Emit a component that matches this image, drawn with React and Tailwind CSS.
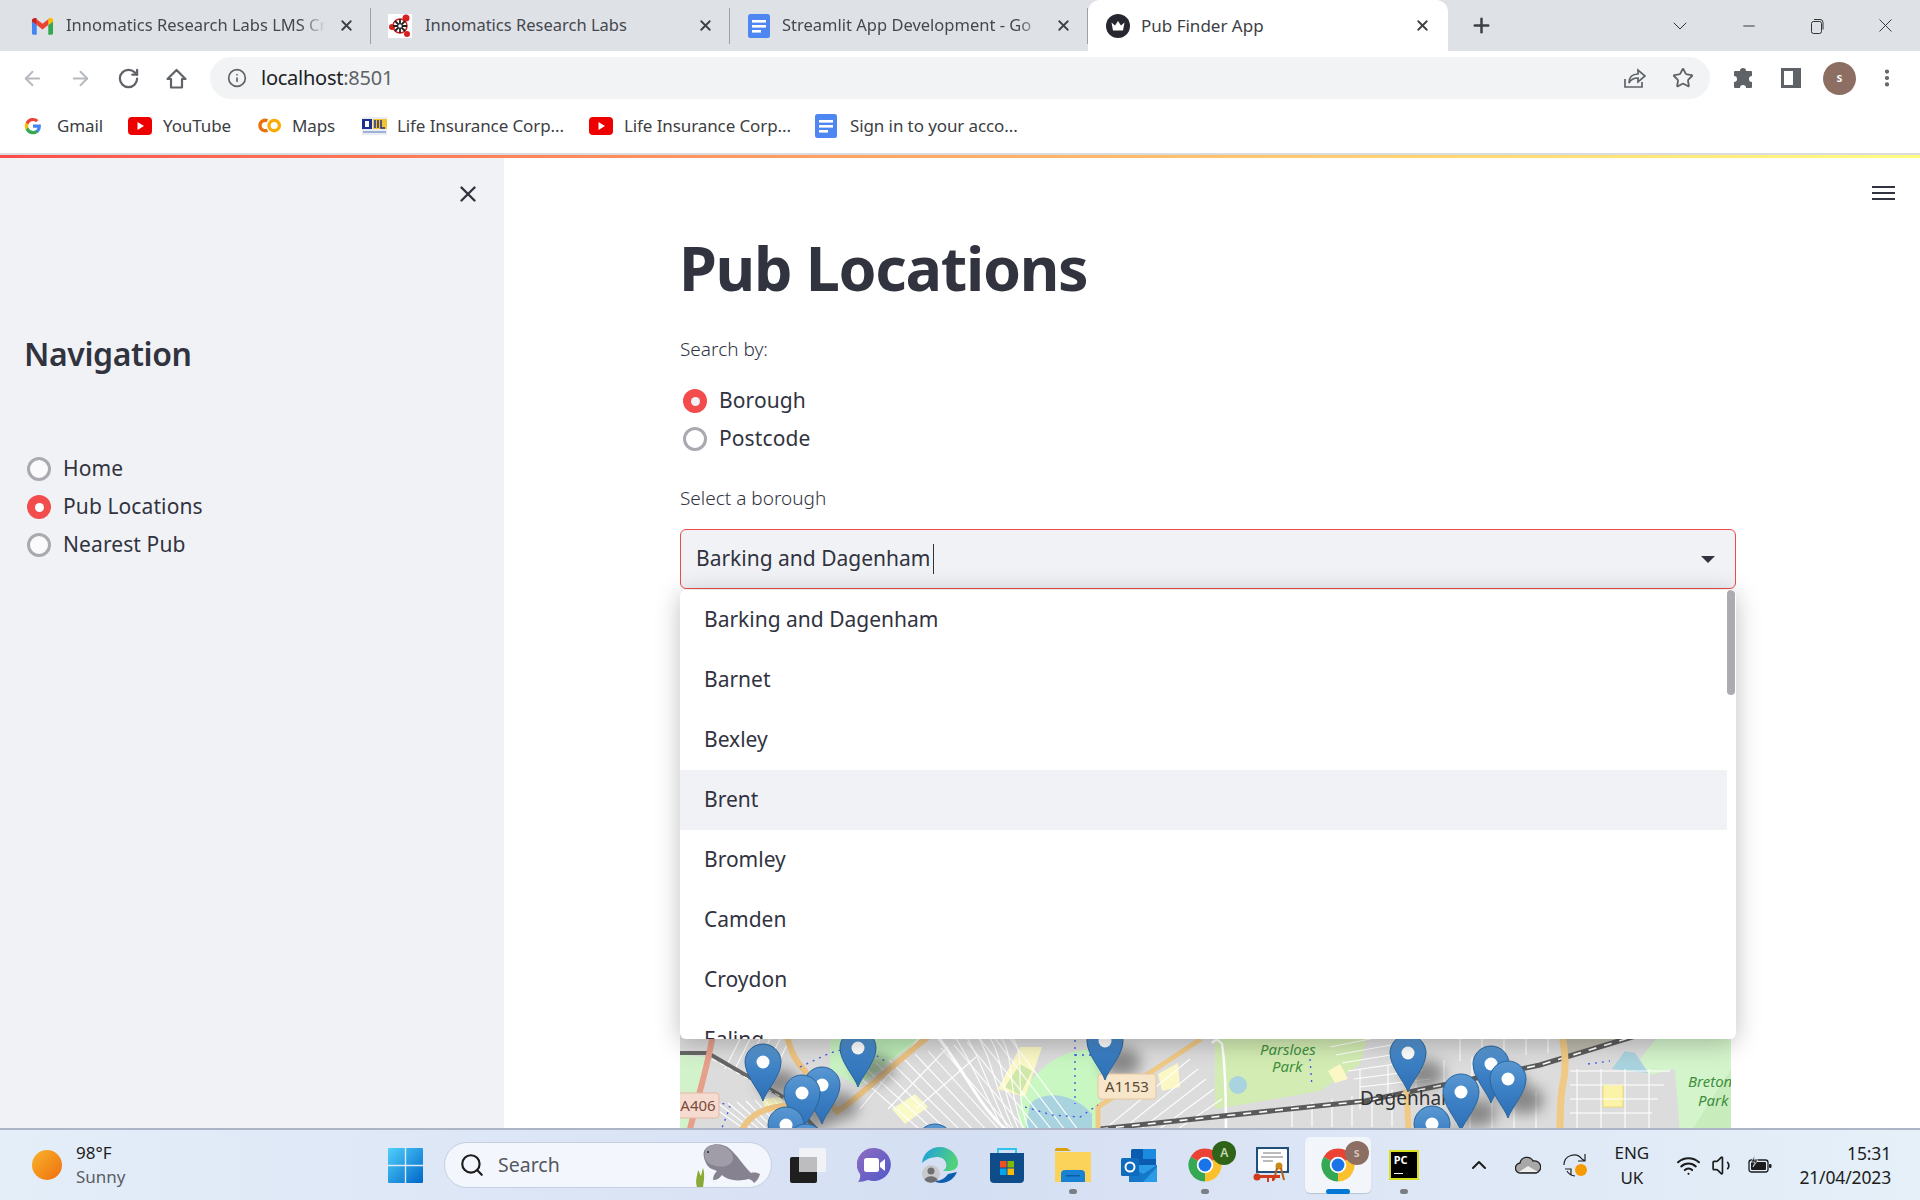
import React from 'react';
import {
	ArrowLeft, ArrowRight, RotateCw, Info, Star, X, Plus, ChevronDown, ChevronUp,
	Minus, EllipsisVertical, Search, Wifi, Volume1,
} from 'lucide-react';

/* favicons and app icons */
const GmailIcon = () => (
	<svg width="23" height="18" viewBox="0 0 24 18">
		<path d="M1 4v12.5A1.5 1.5 0 0 0 2.5 18H6V8z" fill="#4285f4" />
		<path d="M23 4v12.5a1.5 1.5 0 0 1-1.5 1.5H18V8z" fill="#34a853" />
		<path d="M18 1v7l5-3.7V3c0-2-2.3-3.2-4-2z" fill="#fbbc04" />
		<path d="M6 8V2l6 4.6L18 2v6l-6 4.6z" fill="#ea4335" />
		<path d="M1 3v1.3L6 8V1.2C4.300 0 1 1 1 3z" fill="#c5221f" />
	</svg>
);

const GoogleIcon = () => (
	<svg width="18" height="18" viewBox="0 0 24 24">
		<path d="M22.500 12.200c0-.8-.1-1.500-.2-2.200H12v4.200h5.900a5 5 0 0 1-2.200 3.300v2.700h3.500c2.100-1.900 3.300-4.700 3.300-8z" fill="#4285f4" />
		<path d="M12 23c3 0 5.400-1 7.200-2.700l-3.500-2.700c-1 .7-2.200 1-3.700 1-2.800 0-5.300-1.900-6.100-4.500H2.300v2.800A11 11 0 0 0 12 23z" fill="#34a853" />
		<path d="M5.900 14.100a6.600 6.600 0 0 1 0-4.200V7.100H2.300a11 11 0 0 0 0 9.800z" fill="#fbbc04" />
		<path d="M12 5.400c1.600 0 3 .6 4.100 1.600l3.100-3.100A11 11 0 0 0 2.300 7.100l3.600 2.800C6.700 7.300 9.200 5.400 12 5.400z" fill="#ea4335" />
	</svg>
);

const YoutubeIcon = () => (
	<svg width="24" height="18" viewBox="0 0 24 18">
		<rect width="24" height="18" rx="4" fill="#ee0000" />
		<path d="M9.500 5l6.500 4-6.500 4z" fill="#fff" />
	</svg>
);

const DocsIcon = ({ w = 24, h = 24 }) => (
	<svg width={w} height={h} viewBox="0 0 24 24">
		<rect x="1" y="0" width="22" height="24" rx="2.500" fill="#4e86f2" />
		<rect x="5" y="6" width="14" height="2.600" fill="#fff" />
		<rect x="5" y="11" width="14" height="2.600" fill="#fff" />
		<rect x="5" y="16" width="9" height="2.600" fill="#fff" />
	</svg>
);

const ColabIcon = () => (
	<svg width="25" height="17" viewBox="0 0 24 16" fill="none">
		<path d="M10 3.500a5 5 0 1 0 0 9" stroke="#e8710a" strokeWidth="3.200" />
		<circle cx="16.500" cy="8" r="5" stroke="#f9ab00" strokeWidth="3.200" />
	</svg>
);

const LicIcon = () => (
	<svg width="25" height="18" viewBox="0 0 25 18">
		<rect width="25" height="18" fill="#e8edf5" />
		<rect x="0" y="2" width="10" height="10" fill="#1d2f8f" />
		<rect x="3" y="4" width="4" height="6" fill="#fff" />
		<rect x="11" y="2" width="14" height="10" fill="#f2c230" />
		<path d="M13 3v8M16 3v8M19 3v8h4" stroke="#23308c" strokeWidth="1.500" fill="none" />
		<rect x="1" y="14" width="23" height="2" fill="#9fb2d6" />
	</svg>
);

const InnomaticsIcon = () => (
	<svg width="24" height="24" viewBox="0 0 24 24">
		<rect width="24" height="24" fill="#fff" />
		<circle cx="4" cy="13" r="3" fill="#d8201f" />
		<circle cx="18" cy="4" r="3.500" fill="#d8201f" />
		<circle cx="19" cy="20" r="3" fill="#d8201f" />
		<circle cx="12" cy="12" r="7" fill="none" stroke="#d8201f" strokeWidth="1.500" />
		<path d="M12 5v14M5 12h14M7 7l10 10M17 7L7 17" stroke="#222" strokeWidth="1.800" />
		<circle cx="12" cy="12" r="1.800" fill="#fff" />
	</svg>
);

const CrownIcon = () => (
	<svg width="24" height="24" viewBox="0 0 24 24">
		<circle cx="12" cy="12" r="12" fill="#262730" />
		<path d="M5.500 8.500l3.500 3 3-4.500 3 4.500 3.500-3-1.500 8h-10z" fill="#fff" />
	</svg>
);

const ChromeIcon = ({ size = 36 }) => (
	<svg width={size} height={size} viewBox="0 0 24 24">
		<path d="M12 12L2.470 6.500A11 11 0 0 1 21.530 6.500z" fill="#ea4335" />
		<path d="M12 12L21.530 6.500A11 11 0 0 1 12 23z" fill="#fbc02d" />
		<path d="M12 12L12 23A11 11 0 0 1 2.470 6.500z" fill="#34a853" />
		<circle cx="12" cy="12" r="5.500" fill="#fff" />
		<circle cx="12" cy="12" r="4.300" fill="#1a73e8" />
	</svg>
);

const WindowsIcon = () => (
	<svg width="35" height="35" viewBox="0 0 35 35">
		<defs>
			<linearGradient id="winGrad" x1="0" y1="0" x2="1" y2="1">
				<stop offset="0" stopColor="#4fd0fb" />
				<stop offset="1" stopColor="#0067c8" />
			</linearGradient>
		</defs>
		<path d="M1 0h15.800v16.800H0V1a1 1 0 0 1 1-1zM18.200 0H34a1 1 0 0 1 1 1v15.800H18.200zM0 18.200h16.800V35H1a1 1 0 0 1-1-1zM18.200 18.200H35V34a1 1 0 0 1-1 1H18.200z" fill="url(#winGrad)" />
	</svg>
);

const ManateeIcon = () => (
	<svg width="66" height="44" viewBox="0 0 66 44">
		<path d="M2 44c-2-6 0-10 1-17 2 3 2 5 3 6 1-3 1-6 2-8 2 6 1 13 0 19z" fill="#8aa936" />
		<path d="M9 8c4-8 18-9 26-2 7 6 13 16 21 24 3-1 7 0 9 1-1 4-3 7-6 9-2-3-4-4-6-4-10 3-21 1-26-4-2 3-5 5-9 5 0-3 1-6 4-9-5-2-9-3-11-8-2-4-3-8-2-12z" fill="#86828f" />
		<path d="M12 4c6-4 18-3 24 5 4 6 2 12-5 14-8 2-19-1-21-8-1-4 0-8 2-11z" fill="#a09ca8" />
		<circle cx="13" cy="9" r="1" fill="#222" />
	</svg>
);

const TaskViewIcon = () => (
	<svg width="36" height="35" viewBox="0 0 36 35">
		<rect x="0" y="9" width="27" height="26" rx="2" fill="#1f1f1f" />
		<rect x="9" y="0" width="27" height="24" rx="2" fill="#f4f4f6" fillOpacity="0.85" />
		<rect x="9" y="9" width="18" height="15" fill="#bdbdc0" />
	</svg>
);

const TeamsIcon = () => (
	<svg width="34" height="34" viewBox="0 0 34 34">
		<defs>
			<linearGradient id="teamsGrad" x1="0" y1="0" x2="1" y2="1">
				<stop offset="0" stopColor="#8f6cc0" />
				<stop offset="1" stopColor="#5059c9" />
			</linearGradient>
		</defs>
		<path d="M17 0a17 16.500 0 1 1-6 32c-3 1-7 2-10 2 2-2 2.500-5 2-8A17 16.500 0 0 1 17 0z" fill="url(#teamsGrad)" />
		<rect x="7" y="10" width="15" height="14" rx="2.500" fill="#fff" />
		<path d="M23 15l5-4v12l-5-4z" fill="#fff" />
	</svg>
);

const EdgeIcon = () => (
	<svg width="36" height="36" viewBox="0 0 36 36">
		<defs>
			<linearGradient id="edgeGrad" x1="0" y1="0" x2="1" y2="0.300">
				<stop offset="0" stopColor="#1b9de2" />
				<stop offset="1" stopColor="#52d17c" />
			</linearGradient>
		</defs>
		<path d="M0 16C1 6 9 0 18 0c10 0 18 8 18 16 0 6-5 8-10 8h-5c3-2 4-5 3-8-1-4-5-6-9-6-6 0-11 2-15 6z" fill="url(#edgeGrad)" />
		<path d="M35 25c-3 7-9 11-16 11-3 0-6-1-8-3 8 2 12-2 15-6 3-1 6-1 9-2z" fill="#0f5fb0" />
		<circle cx="9" cy="27" r="9" fill="#c9c9cc" />
		<circle cx="9" cy="24" r="3.500" fill="#6f6f73" />
		<path d="M2.500 33a7 6 0 0 1 13 0 9 9 0 0 1-13 0z" fill="#6f6f73" />
	</svg>
);

const StoreIcon = () => (
	<svg width="36" height="36" viewBox="0 0 36 36">
		<path d="M9 6V2h18v4" fill="none" stroke="#2ec4f0" strokeWidth="1.800" />
		<path d="M1 6h34v26a4 4 0 0 1-4 4H5a4 4 0 0 1-4-4z" fill="#0f4c8a" />
		<rect x="11" y="14" width="6.500" height="6.500" fill="#f25022" />
		<rect x="18.500" y="14" width="6.500" height="6.500" fill="#7fba00" />
		<rect x="11" y="21.500" width="6.500" height="6.500" fill="#00a4ef" />
		<rect x="18.500" y="21.500" width="6.500" height="6.500" fill="#ffb900" />
	</svg>
);

const ExplorerIcon = () => (
	<svg width="36" height="34" viewBox="0 0 36 34">
		<path d="M0 2a2 2 0 0 1 2-2h10l4 3h-16z" fill="#d9a106" />
		<path d="M0 4h36v30H0z" fill="#fbd35a" />
		<path d="M6 34V26a4 4 0 0 1 4-4h16a4 4 0 0 1 4 4v8z" fill="#1a82d4" />
		<rect x="11" y="27" width="14" height="1.500" fill="#0d5da3" />
	</svg>
);

const OutlookIcon = () => (
	<svg width="36" height="33" viewBox="0 0 36 33">
		<rect x="10" y="0" width="25" height="20" rx="1.500" fill="#0a5cb0" />
		<rect x="22" y="0" width="13" height="10" fill="#1c8ade" />
		<path d="M8 16h28v17H8z" fill="#2a9be6" />
		<path d="M8 16l14 9 14-9v2L22 33H8z" fill="#1577c9" />
		<rect x="0" y="9" width="18" height="18" rx="1.500" fill="#0f6cbd" />
		<circle cx="9" cy="18" r="4.500" fill="none" stroke="#fff" strokeWidth="2" />
	</svg>
);

const CertIcon = () => (
	<svg width="36" height="36" viewBox="0 0 36 36">
		<rect x="3" y="0" width="33" height="26" fill="#1f4f7a" />
		<rect x="5" y="2" width="29" height="22" rx="1" fill="#fff" />
		<path d="M10 6h18M8 10h22M10 14h10" stroke="#777" strokeWidth="1" />
		<circle cx="26" cy="19" r="3.500" fill="#c98a1a" />
		<path d="M24 21l-3 12M28 21l3 12" stroke="#b2601a" strokeWidth="2" />
		<rect x="3" y="28" width="24" height="3" fill="#d23a1c" />
		<circle cx="4" cy="30" r="3.500" fill="#d23a1c" />
		<path d="M15 31v4M20 31v3" stroke="#d23a1c" strokeWidth="2" />
	</svg>
);

const CloudIcon = () => (
	<svg width="26" height="18" viewBox="0 0 26 18">
		<path d="M6 17a5 5 0 0 1-1-10 7 7 0 0 1 13-2 6 6 0 0 1 3 12z" fill="#a8a8a8" stroke="#222" strokeWidth="1.300" />
		<path d="M4 16l9-6 10 6z" fill="#eee" />
	</svg>
);

const SyncIcon = () => (
	<svg width="26" height="26" viewBox="0 0 26 26" fill="none">
		<path d="M1 13a10 10 0 0 1 18-6l3 2M22 2v7h-7" stroke="#222" strokeWidth="1.200" />
		<path d="M12 24a10 10 0 0 1-8-5M2 17h6v6" stroke="#222" strokeWidth="1.200" />
		<circle cx="18" cy="18" r="6" fill="#f59a00" />
	</svg>
);

const BatteryIcon = () => (
	<svg width="24" height="20" viewBox="0 0 24 20" fill="none">
		<rect x="1" y="5" width="19" height="12" rx="2.500" stroke="#1c1c1c" strokeWidth="1.300" />
		<rect x="3" y="7" width="15" height="8" rx="1" fill="#1c1c1c" />
		<rect x="21" y="9" width="2.500" height="4" rx="1" fill="#1c1c1c" />
		<path d="M7 0L3 7h4l-2 5 5-7H6z" fill="#1c1c1c" stroke="#e6eef8" strokeWidth="0.700" />
	</svg>
);

const HomeIcon = () => (
	<svg width="23" height="23" viewBox="0 0 23 23" fill="none" stroke="#5f6368" strokeWidth="2.200" strokeLinejoin="round">
		<path d="M11.500 3L2.500 12H6V20.500H17V12H20.500z" />
	</svg>
);

const ShareIcon = () => (
	<svg width="22" height="22" viewBox="0 0 22 22" fill="none" stroke="#5f6368" strokeWidth="1.700">
		<path d="M1 12v8h17v-5" />
		<path d="M5 16c0-6 3-9 9-9V3l7 6-7 6v-4c-4 0-7 1-9 5z" />
	</svg>
);

const PuzzleIcon = () => (
	<svg width="22" height="22" viewBox="0 0 22 22" fill="#5f6368">
		<path d="M8 4a3 3 0 0 1 6 0h5a1 1 0 0 1 1 1v4a3 3 0 0 0 0 6v5a1 1 0 0 1-1 1h-5a3 3 0 0 0-6 0H3a1 1 0 0 1-1-1v-5a3 3 0 0 0 0-6V5a1 1 0 0 1 1-1z" />
	</svg>
);

const SidePanelIcon = () => (
	<svg width="20" height="20" viewBox="0 0 20 20">
		<rect x="1.500" y="1.500" width="17" height="17" fill="none" stroke="#5f6368" strokeWidth="3" />
		<rect x="12" y="1" width="7" height="18" fill="#5f6368" />
	</svg>
);

const RestoreIcon = () => (
	<svg width="16" height="16" viewBox="0 0 16 16" fill="none" stroke="#333" strokeWidth="1">
		<rect x="2.500" y="3.500" width="10" height="12" rx="2" />
		<path d="M5 1.500h6a3 3 0 0 1 3 3v7" />
	</svg>
);

/* street map strip under the dropdown */
const range = (n) => Array.from({ length: n }, (_, i) => i);

const pins = [
	[83, 62], [178, 48], [142, 85], [122, 93], [106, 125], [126, 142], [255, 142], [425, 41],
	[728, 53], [811, 64], [828, 79], [781, 92], [752, 124],
];

const Pin = ({ x, y }) => (
	<g transform={`translate(${x} ${y})`}>
		<path d="M0 0C-3-10-18-25-18-39A18 18 0 1 1 18-39C18-25 3-10 0 0Z" fill="url(#pinGrad)" stroke="#2a659c" strokeWidth="1" />
		<circle cx="0" cy="-39" r="6.500" fill="#fff" />
	</g>
);

const MapStrip = () => (
	<svg width="1051" height="106" viewBox="0 -12 1051 106" className="block">
		<defs>
			<linearGradient id="pinGrad" x1="0" y1="0" x2="0" y2="1">
				<stop offset="0" stopColor="#5a98d2" />
				<stop offset="0.5" stopColor="#3b7fc4" />
				<stop offset="1" stopColor="#2f6fb4" />
			</linearGradient>
			<filter id="pinShadow"><feGaussianBlur stdDeviation="7" /></filter>
			<filter id="soft"><feGaussianBlur stdDeviation="0.500" /></filter>
		</defs>
		<g filter="url(#soft)">
			<rect x="0" y="-12" width="1051" height="106" fill="#dcdcdc" />
			{/* green areas and water */}
			<path d="M0 15L26 18L10 94H0z" fill="#d2f2cc" />
			<path d="M150 -12H255L178 48L150 30z" fill="#c9f2c2" />
			<path d="M170 14L210 -12L250 -12L178 48z" fill="#bfeeb9" />
			<path d="M350 42C370 20 385 10 420 10V68L416 94H342C335 70 340 55 350 42z" fill="#c8f7c2" />
			<path d="M350 65C365 50 395 55 412 75V94H345z" fill="#a9d3de" />
			<path d="M318 50L340 8L362 8L345 58z" fill="#fbf8c6" />
			<path d="M325 48L340 25L352 32L340 56z" fill="#cfe8aa" />
			<path d="M212 70L235 55L248 68L225 85z" fill="#fafac8" />
			<path d="M83 60L100 58L105 70L85 72z" fill="#f6f4bc" />
			<path d="M478 35L498 24L500 48L482 52z" fill="#fbf8c6" />
			<path d="M535 -12H690L680 25L640 52L535 70z" fill="#d3ecb3" />
			<ellipse cx="558" cy="46" rx="9" ry="9" fill="#a9d3de" />
			<path d="M648 32L660 25L668 40L655 44z" fill="#fbf8c6" />
			<path d="M885 -12H985L885 20z" fill="#bcb9ad" />
			<path d="M1000 94L995 30L970 36L960 20L985 -12H1051V94z" fill="#d4f4cb" />
			<path d="M1010 94L1051 30V94z" fill="#c8ecbc" />
			<path d="M932 30L945 12L955 14L968 34z" fill="#a9d3de" />
			<rect x="923" y="46" width="20" height="22" fill="#fbf3a8" stroke="#e8d878" />
			{/* housing streets */}
			<g stroke="#fff" strokeWidth="1.100" fill="none">
				{range(13).map((i) => (
					<path key={i} d={`M${170 + i * 13} ${30 - i * 3}L${245 + i * 13} 95`} />
				))}
				{range(3).map((i) => (
					<path key={i} d={`M${240 + i * 28} ${-2 + i * 10}L${180 + i * 28} 70`} />
				))}
				{range(6).map((i) => (
					<path key={i} d={`M${270 + i * 12} ${-10 + i}C${290 + i * 12} 20 ${300 + i * 6} 45 ${325 + i * 5} 94`} />
				))}
				{range(5).map((i) => (
					<path key={i} d={`M${420 + i * 18} 94L${510 + i * 8} ${20 + i * 10}`} />
				))}
				{range(8).map((i) => (
					<path key={i} d={`M${30 + i * 9} ${66 - i}L${70 + i * 7} 94`} />
				))}
				{range(6).map((i) => (
					<path key={i} d={`M${60 + i * 10} 0L${45 + i * 10} 30`} />
				))}
				{range(6).map((i) => (
					<path key={i} d={`M${680 + i * 28} ${70 - i * 8}V${30 - i * 3}`} />
				))}
				{range(6).map((i) => (
					<path key={i} d={`M${650 + i * 6} ${8 + i * 8}L${715 + i * 7} ${-5 + i * 9}`} />
				))}
				{range(5).map((i) => (
					<path key={i} d={`M${780 + i * 22} -12V${22 - i * 2}`} />
				))}
				{range(4).map((i) => (
					<path key={i} d={`M890 ${32 + i * 14}H${990 - i * 6}`} />
				))}
				{range(4).map((i) => (
					<path key={i} d={`M${897 + i * 24} 30V94`} />
				))}
				{range(6).map((i) => (
					<path key={i} d={`M${612 + i * 20} 88V${66 - i * 3}`} />
				))}
				{range(4).map((i) => (
					<path key={i} d={`M${790 + i * 22} 94V${50 + i}`} />
				))}
			</g>
			<path d="M258 -2C290 40 300 70 330 94" stroke="#fff" strokeWidth="3" fill="none" />
			<path d="M0 4C4 0 6 0 10 5C14 30 14 70 14 94" stroke="#fff" strokeWidth="2.500" fill="none" transform="translate(532 0)" />
			{/* railways */}
			<path d="M0 14L28 14L110 62L140 94" stroke="#666" strokeWidth="4" fill="none" />
			<path d="M32 20L105 60" stroke="#fff" strokeWidth="1" strokeDasharray="5 4" fill="none" />
			<path d="M420 90L685 62L860 26L985 -12" stroke="#5a5a5a" strokeWidth="5" fill="none" />
			<path d="M420 90L685 62L860 26L985 -12" stroke="#fff" strokeWidth="1.600" strokeDasharray="8 8" fill="none" />
			{/* main roads */}
			<path d="M34 -12C30 20 20 50 9 94" stroke="#e69f8a" strokeWidth="6" fill="none" />
			<path d="M105 -12C110 15 118 25 125 32L158 74" stroke="#eec482" strokeWidth="6" fill="none" />
			<path d="M60 94C70 74 85 68 112 66" stroke="#eec482" strokeWidth="6" fill="none" />
			<path d="M155 74C175 62 190 45 255 -8" stroke="#eec482" strokeWidth="6" fill="none" />
			<path d="M418 94V68L521 0" stroke="#f0c985" strokeWidth="5" fill="none" />
			<path d="M726 50C728 65 727 75 729 94" stroke="#f0c985" strokeWidth="6" fill="none" />
			<path d="M881 -12C884 10 888 25 882 50C880 65 880 75 880 94" stroke="#f0c985" strokeWidth="7" fill="none" />
			{/* cycle and foot paths */}
			<path d="M120 28L150 14L180 6L208 24M30 58L50 68L40 94M395 -6V65M345 68L372 76L400 78L418 66M395 16L430 16" stroke="#3f56e8" strokeWidth="1.300" strokeDasharray="2 5" fill="none" />
			<path d="M630 20L632 48M908 25L930 22" stroke="#3f56e8" strokeWidth="1.300" strokeDasharray="2 5" fill="none" />
		</g>
		{/* marker shadows */}
		<g filter="url(#pinShadow)" fill="#444" opacity="0.55">
			{pins.map(([x, y]) => (
				<ellipse key={`${x}-${y}`} cx={x + 16} cy={y - 18} rx="20" ry="14" />
			))}
		</g>
		{/* road shields and place names */}
		<rect x="-3" y="54" width="42" height="25" rx="3" fill="#f6dcd0" stroke="#e3b9a6" />
		<text x="18" y="72" textAnchor="middle" fontSize="15" fill="#7a4a3a">A406</text>
		<rect x="418" y="35" width="58" height="25" rx="3" fill="#f8e6cb" stroke="#e5c79c" />
		<text x="447" y="53" textAnchor="middle" fontSize="15" fill="#5a4a35">A1153</text>
		<g fontStyle="italic" fontSize="15" fill="#3f8f3f">
			<text x="580" y="16">Parsloes</text>
			<text x="592" y="33">Park</text>
			<text x="1008" y="48">Bretons</text>
			<text x="1018" y="67">Park</text>
		</g>
		<text x="680" y="66" fontSize="19" fill="#333">Dagenham</text>
		{pins.map(([x, y]) => <Pin key={`${x}-${y}`} x={x} y={y} />)}
	</svg>
);

const tabs = [
	{ icon: <GmailIcon />, title: 'Innomatics Research Labs LMS Cr', width: 'w-[363px]', pad: 'pl-[22px]', gap: 'gap-[12px]', fade: true },
	{ icon: <InnomaticsIcon />, title: 'Innomatics Research Labs', width: 'w-[359px]', pad: 'pl-[17px]', gap: 'gap-[13px]' },
	{ icon: <DocsIcon />, title: 'Streamlit App Development - Go', width: 'w-[358px]', pad: 'pl-[17px]', gap: 'gap-[11px]', fade: true },
];

const bookmarks = [
	{ icon: <GoogleIcon />, label: 'Gmail', width: 'w-[104px]', gap: 'gap-[15px]' },
	{ icon: <YoutubeIcon />, label: 'YouTube', width: 'w-[129px]', gap: 'gap-[11px]' },
	{ icon: <ColabIcon />, label: 'Maps', width: 'w-[105px]', gap: 'gap-[10px]' },
	{ icon: <LicIcon />, label: 'Life Insurance Corp...', width: 'w-[227px]', gap: 'gap-[10px]' },
	{ icon: <YoutubeIcon />, label: 'Life Insurance Corp...', width: 'w-[225px]', gap: 'gap-[11px]' },
	{ icon: <DocsIcon />, label: 'Sign in to your acco...', width: 'w-[220px]', gap: 'gap-[12px]' },
];

const TabStrip = () => (
	<div className="flex h-[51px] shrink-0 items-center bg-[#dee1e6] text-[#45484e]">
		<div className="flex h-[51px] items-center pl-[8px]">
			{tabs.map((t) => (
				<div key={t.title} className={`flex h-[36px] ${t.width} items-center ${t.gap} border-r border-[#9da0a6] ${t.pad} pr-[15px]`}>
					<span className="flex w-[24px] shrink-0 justify-center">{t.icon}</span>
					<span className={`min-w-0 flex-1 overflow-hidden whitespace-nowrap text-[16.500px] ${t.fade ? '[mask-image:linear-gradient(to_right,black_90%,transparent)]' : ''}`}>{t.title}</span>
					<X size={17} strokeWidth={2.600} className="shrink-0 text-[#3c4043]" />
				</div>
			))}
			<div className="flex h-[51px] w-[360px] items-center gap-[11px] rounded-t-[12px] bg-white pl-[18px] pr-[17px] text-[#3c4043]">
				<CrownIcon />
				<span className="flex-1 text-[17px]">Pub Finder App</span>
				<X size={17} strokeWidth={2.600} />
			</div>
			<Plus size={23} strokeWidth={2.600} className="ml-[22px] text-[#3c4043]" />
		</div>
		<div className="ml-auto flex items-center text-[#333]">
			<span className="flex w-[68.500px] justify-center"><ChevronDown size={24} strokeWidth={1} /></span>
			<span className="flex w-[68.500px] justify-center"><Minus size={18} strokeWidth={1.300} /></span>
			<span className="flex w-[68.500px] justify-center"><RestoreIcon /></span>
			<span className="flex w-[68.500px] justify-center"><X size={23} strokeWidth={1} /></span>
		</div>
	</div>
);

const Toolbar = () => (
	<div className="flex h-[51px] shrink-0 items-center bg-white pl-[21px] pt-[3px] text-[#5f6368]">
		<div className="flex w-[189px] items-center gap-[25px]">
			<ArrowLeft size={23} className="text-[#b6b9bd]" />
			<ArrowRight size={23} className="text-[#b6b9bd]" />
			<RotateCw size={23} strokeWidth={2.300} />
			<HomeIcon />
		</div>
		<div className="flex h-[42px] w-[1500px] items-center rounded-full bg-[#f1f3f4] pl-[17px] pr-[16px]">
			<Info size={20} />
			<span className="ml-[14px] text-[20px] tracking-[-0.25px] text-[#202124]">localhost<span className="text-[#5f6368]">:8501</span></span>
			<div className="ml-auto flex items-center gap-[26px]">
				<ShareIcon />
				<Star size={22} />
			</div>
		</div>
		<div className="ml-[22px] flex items-center">
			<PuzzleIcon />
			<span className="ml-[27px]"><SidePanelIcon /></span>
			<span className="ml-[22px] flex h-[33px] w-[33px] items-center justify-center rounded-full bg-[#8d6e63] text-[12px] font-semibold text-white">s</span>
			<EllipsisVertical size={22} strokeWidth={2.600} className="ml-[20px]" />
		</div>
	</div>
);

const BookmarksBar = () => (
	<div className="flex h-[51px] shrink-0 items-center bg-white pb-[4px] pl-[24px] text-[#3c4043]">
		{bookmarks.map((b, i) => (
			<div key={i} className={`flex ${b.width} items-center ${b.gap} text-[17px] tracking-[-0.1px]`}>
				{b.icon}
				<span className="whitespace-nowrap">{b.label}</span>
			</div>
		))}
	</div>
);

const Radio = ({ label, checked, dotClass = 'bg-[#f0f2f6]', offClass = 'bg-white' }) => (
	<div className="flex h-[38px] items-center gap-[12px]">
		{checked ? (
			<span className="flex h-[24px] w-[24px] items-center justify-center rounded-full bg-[#f24c4c]">
				<span className={`h-[9px] w-[9px] rounded-full ${dotClass}`} />
			</span>
		) : (
			<span className={`h-[24px] w-[24px] rounded-full border-[3px] border-[#a9a9b0] ${offClass}`} />
		)}
		<span className="text-[21px] tracking-[0.1px] text-[#31333f]">{label}</span>
	</div>
);

const Sidebar = () => (
	<aside className="flex w-[504px] shrink-0 flex-col bg-[#f0f2f6] pl-[27px]">
		<div className="flex justify-end pr-[23px] pt-[23px]">
			<X size={26} strokeWidth={2.200} className="text-[#31333f]" />
		</div>
		<h2 className="-ml-[3px] mt-[127px] text-[32px] font-semibold leading-[40px] tracking-[-0.4px] text-[#31333f]">Navigation</h2>
		<div className="mt-[76px]">
			<Radio label="Home" offClass="bg-[#fafafc]" />
			<Radio label="Pub Locations" checked dotClass="bg-white" />
			<Radio label="Nearest Pub" offClass="bg-[#fafafc]" />
		</div>
	</aside>
);

const boroughs = ['Barking and Dagenham', 'Barnet', 'Bexley', 'Brent', 'Bromley', 'Camden', 'Croydon', 'Ealing'];

const BoroughSelect = () => (
	<div className="relative mt-[18px] w-[1056px]">
		<div className="flex h-[60px] items-center rounded-[6px] border border-[#f04b4b] bg-[#f0f2f6] pl-[15px] pr-[20px]">
			<span className="text-[21px] text-[#31333f]">Barking and Dagenham</span>
			<span className="ml-[3px] h-[30px] w-[1px] bg-[#31333f]" />
			<span className="ml-auto h-0 w-0 border-x-[7px] border-t-[7px] border-x-transparent border-t-[#31333f]" />
		</div>
		{/* open list, lies over the map */}
		<div className="absolute left-0 top-[61px] z-10 h-[449px] w-[1056px] overflow-hidden rounded-[6px] bg-white shadow-[0_4px_24px_rgba(0,0,0,0.25)]">
			{boroughs.map((name) => (
				<div key={name} className={`flex h-[60px] w-[1047px] items-center pl-[24px] text-[21px] text-[#31333f] ${name === 'Brent' ? 'bg-[#f0f2f6]' : ''}`}>
					{name}
				</div>
			))}
			<span className="absolute right-[1px] top-0 h-[105px] w-[8px] rounded-full bg-[#ababb0]" />
		</div>
	</div>
);

const MainPanel = () => (
	<main className="relative min-w-0 flex-1 overflow-hidden bg-white pl-[176px]">
		<div className="absolute right-[25px] top-[28px] flex w-[23px] flex-col gap-[4px]">
			<span className="h-[2px] bg-[#31333f]" />
			<span className="h-[2px] bg-[#31333f]" />
			<span className="h-[2px] bg-[#31333f]" />
		</div>
		<h1 className="-ml-[1px] mt-[68px] h-[84px] text-[61px] font-bold leading-[84px] tracking-[-1.300px] text-[#31333f]">Pub Locations</h1>
		<p className="mt-[26px] h-[26px] text-[19px] font-light leading-[26px] text-[#31333f]">Search by:</p>
		<div className="mt-[20px] pl-[3px]">
			<Radio label="Borough" checked />
			<Radio label="Postcode" />
		</div>
		<p className="mt-[27px] h-[26px] text-[19px] font-light leading-[26px] text-[#31333f]">Select a borough</p>
		<BoroughSelect />
		<div className="mt-[438px] w-[1051px]">
			<MapStrip />
		</div>
	</main>
);

const taskbarApps = [
	{ key: 'taskview', icon: <TaskViewIcon /> },
	{ key: 'teams', icon: <TeamsIcon /> },
	{ key: 'edge', icon: <EdgeIcon /> },
	{ key: 'store', icon: <StoreIcon /> },
	{ key: 'explorer', icon: <ExplorerIcon />, running: true },
	{ key: 'outlook', icon: <OutlookIcon /> },
	{ key: 'chromeA', icon: <ChromeIcon />, running: true, badge: 'A', badgeClass: 'bg-[#2f6418] text-[#c8d8b8]' },
	{ key: 'cert', icon: <CertIcon /> },
	{ key: 'chromeS', icon: <ChromeIcon />, active: true, badge: 's', badgeClass: 'bg-[#8d6e63] text-[#d8c8c0]' },
	{
		key: 'pycharm',
		running: true,
		icon: (
			<span className="flex h-[30px] w-[30px] flex-col justify-between border-[2px] border-[#d8e020] bg-black px-[3px] py-[2px] text-[11px] font-bold leading-[12px] text-white">
				<span>PC</span>
				<span className="mb-[2px] h-[1.5px] w-[9px] bg-white" />
			</span>
		),
	},
];

const Taskbar = () => (
	<footer className="flex h-[72px] shrink-0 items-center border-t-[2px] border-[#adb4c6] bg-gradient-to-r from-[#e4eef9] via-[#d5dff3] to-[#e6f0f9]">
		<div className="flex w-[388px] shrink-0 items-center pl-[32px]">
			<span className="h-[30px] w-[30px] rounded-full bg-gradient-to-br from-[#f6b42a] to-[#ef6c0c]" />
			<div className="ml-[14px] text-[17px] leading-[24px]">
				<div className="text-[#1c1c1c]">98°F</div>
				<div className="text-[#5a5d63]">Sunny</div>
			</div>
		</div>
		<WindowsIcon />
		<div className="ml-[21px] flex h-[46px] w-[328px] shrink-0 items-center rounded-full border border-[#c6cfe2] bg-[#f3f6fc] pl-[14px] pr-[10px]">
			<Search size={26} strokeWidth={2} className="text-[#1c1c1c]" />
			<span className="ml-[13px] text-[19.500px] text-[#55585e]">Search</span>
			<span className="ml-auto"><ManateeIcon /></span>
		</div>
		<div className="ml-[3px] flex shrink-0 items-center">
			{taskbarApps.map((app) => (
				<div
					key={app.key}
					className={`relative flex h-[56px] w-[66.200px] items-center justify-center ${app.active ? 'rounded-[5px] bg-[#f2f5fa] shadow-[0_1px_1px_rgba(0,0,0,0.15)]' : ''}`}
				>
					{app.icon}
					{app.badge && (
						<span className={`absolute right-[2px] top-[4px] flex h-[24px] w-[24px] items-center justify-center rounded-full text-[12px] font-semibold ${app.badgeClass}`}>{app.badge}</span>
					)}
					{app.running && <span className="absolute bottom-[-1px] h-[5px] w-[8px] rounded-full bg-[#7b7e85]" />}
					{app.active && <span className="absolute bottom-[-1px] h-[5px] w-[24px] rounded-full bg-[#0078d4]" />}
				</div>
			))}
		</div>
		<div className="ml-[30px] flex min-w-0 flex-1 items-center pr-[29px] text-[#1c1c1c]">
			<ChevronUp size={24} strokeWidth={2} />
			<span className="ml-[24px]"><CloudIcon /></span>
			<span className="ml-[22px]"><SyncIcon /></span>
			<div className="ml-[24px] w-[38px] text-center text-[17px] leading-[25px]">
				<div>ENG</div>
				<div>UK</div>
			</div>
			<Wifi size={25} strokeWidth={2} className="ml-[25px]" />
			<Volume1 size={25} strokeWidth={1.600} className="ml-[10px]" />
			<span className="ml-[12px]"><BatteryIcon /></span>
			<div className="ml-auto whitespace-nowrap text-right text-[17.500px] leading-[24px] tracking-[-0.15px]">
				<div>15:31</div>
				<div>21/04/2023</div>
			</div>
		</div>
	</footer>
);

export default function App() {
	return (
		<div className="flex h-[1200px] w-[1920px] flex-col overflow-hidden bg-white font-['Noto_Sans','Liberation_Sans',sans-serif]">
			<TabStrip />
			<Toolbar />
			<BookmarksBar />
			<div className="h-[2px] shrink-0 bg-[#dadce0]" />
			<div className="h-[3px] shrink-0 bg-gradient-to-r from-[#ff4b4b] to-[#fffd80]" />
			<div className="flex min-h-0 flex-1">
				<Sidebar />
				<MainPanel />
			</div>
			<Taskbar />
		</div>
	);
}
